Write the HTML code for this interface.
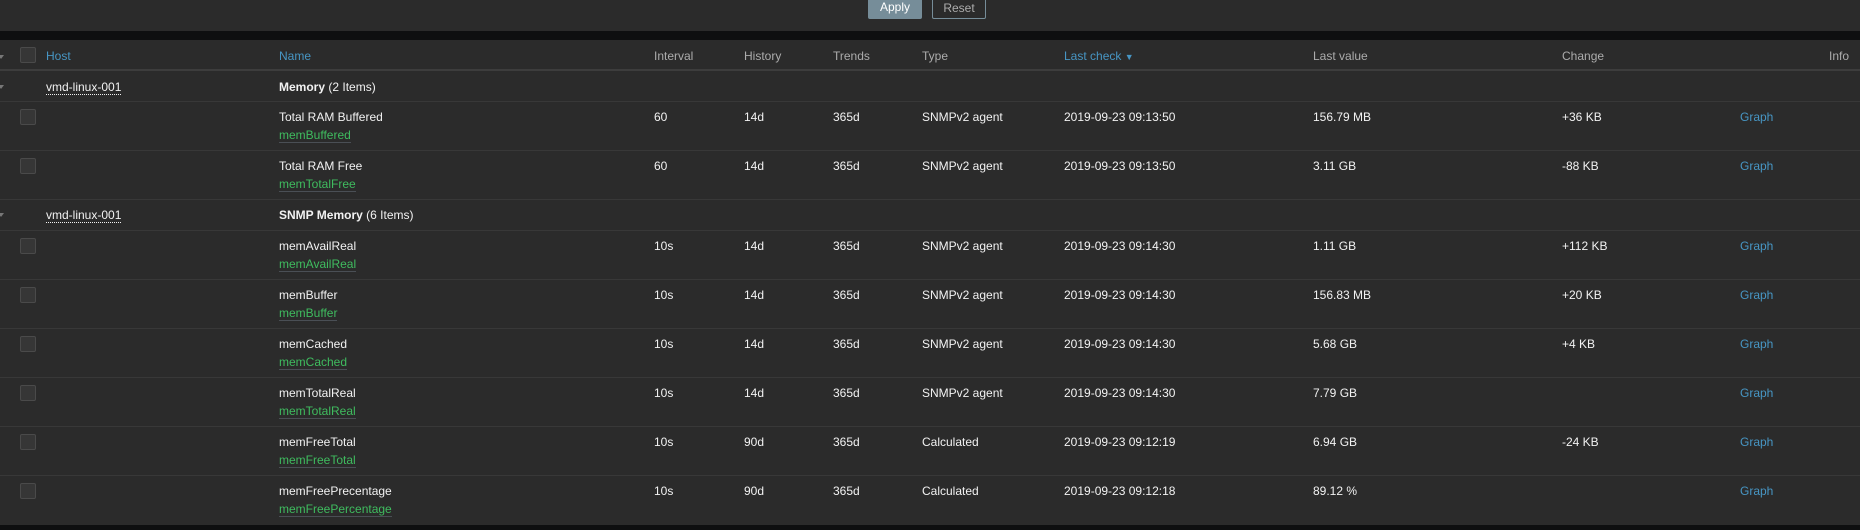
<!DOCTYPE html>
<html><head><meta charset="utf-8"><style>
*{margin:0;padding:0;box-sizing:border-box}
body{width:1860px;height:530px;background:#2b2b2b;font-family:"Liberation Sans",Arial,sans-serif;font-size:12px;color:#f2f2f2;position:relative;overflow:hidden}
.a{position:absolute;white-space:nowrap}
.btn{position:absolute;top:-2px;height:21px;width:54px;border-radius:2px;text-align:center;line-height:19px;font-size:12px}
.band{position:absolute;left:0;top:31px;width:1860px;height:9px;background:#0e0f10}
.hdr{position:absolute;left:0;top:40px;width:1860px;height:31px;border-bottom:2px solid #3d3d3d}
.row{position:absolute;left:0;width:1860px;border-bottom:1px solid #383838}
.cb{position:absolute;left:20px;width:16px;height:16px;background:#363636;border:1px solid #4a4a4a;border-radius:2px}
.h{color:#acacac}
.lk{color:#4796c4}
.key{color:#3fbc5f;border-bottom:1px solid #4a4f55}
.host{border-bottom:1px dotted #f2f2f2}
.tri{position:absolute;left:0;width:0;height:0;border-left:3px solid transparent;border-right:3px solid transparent;border-top:4px solid #777}
</style></head><body>
<div class="btn" style="left:868px;background:#768d99;color:#fff">Apply</div>
<div class="btn" style="left:932px;border:1px solid #768d99;color:#acacac">Reset</div>
<div class="band"></div>
<div class="hdr">
<div class="tri" style="top:15px;left:-2px"></div>
<div class="cb" style="top:7px"></div>
<div class="a lk" style="left:46px;top:9px">Host</div>
<div class="a lk" style="left:279px;top:9px">Name</div>
<div class="a h" style="left:654px;top:9px">Interval</div>
<div class="a h" style="left:744px;top:9px">History</div>
<div class="a h" style="left:833px;top:9px">Trends</div>
<div class="a h" style="left:922px;top:9px">Type</div>
<div class="a lk" style="left:1064px;top:9px">Last check <span style="font-size:9px">▼</span></div>
<div class="a h" style="left:1313px;top:9px">Last value</div>
<div class="a h" style="left:1562px;top:9px">Change</div>
<div class="a h" style="left:1829px;top:9px">Info</div>
</div>

<div class="row" style="top:73px;height:29px">
<div class="tri" style="top:12px;left:-2px"></div>
<div class="a host" style="left:46px;top:7px">vmd-linux-001</div>
<div class="a" style="left:279px;top:7px"><b>Memory</b> (2 Items)</div>
</div>
<div class="row" style="top:102px;height:49px">
<div class="cb" style="top:7px"></div>
<div class="a" style="left:279px;top:8px">Total RAM Buffered</div>
<div class="a key" style="left:279px;top:26px">memBuffered</div>
<div class="a" style="left:654px;top:8px">60</div><div class="a" style="left:744px;top:8px">14d</div><div class="a" style="left:833px;top:8px">365d</div><div class="a" style="left:922px;top:8px">SNMPv2 agent</div><div class="a" style="left:1064px;top:8px">2019-09-23 09:13:50</div><div class="a" style="left:1313px;top:8px">156.79 MB</div><div class="a" style="left:1562px;top:8px">+36 KB</div><div class="a lk" style="left:1740px;top:8px">Graph</div>
</div>
<div class="row" style="top:151px;height:49px">
<div class="cb" style="top:7px"></div>
<div class="a" style="left:279px;top:8px">Total RAM Free</div>
<div class="a key" style="left:279px;top:26px">memTotalFree</div>
<div class="a" style="left:654px;top:8px">60</div><div class="a" style="left:744px;top:8px">14d</div><div class="a" style="left:833px;top:8px">365d</div><div class="a" style="left:922px;top:8px">SNMPv2 agent</div><div class="a" style="left:1064px;top:8px">2019-09-23 09:13:50</div><div class="a" style="left:1313px;top:8px">3.11 GB</div><div class="a" style="left:1562px;top:8px">-88 KB</div><div class="a lk" style="left:1740px;top:8px">Graph</div>
</div>
<div class="row" style="top:200px;height:31px">
<div class="tri" style="top:13px;left:-2px"></div>
<div class="a host" style="left:46px;top:8px">vmd-linux-001</div>
<div class="a" style="left:279px;top:8px"><b>SNMP Memory</b> (6 Items)</div>
</div>
<div class="row" style="top:231px;height:49px">
<div class="cb" style="top:7px"></div>
<div class="a" style="left:279px;top:8px">memAvailReal</div>
<div class="a key" style="left:279px;top:26px">memAvailReal</div>
<div class="a" style="left:654px;top:8px">10s</div><div class="a" style="left:744px;top:8px">14d</div><div class="a" style="left:833px;top:8px">365d</div><div class="a" style="left:922px;top:8px">SNMPv2 agent</div><div class="a" style="left:1064px;top:8px">2019-09-23 09:14:30</div><div class="a" style="left:1313px;top:8px">1.11 GB</div><div class="a" style="left:1562px;top:8px">+112 KB</div><div class="a lk" style="left:1740px;top:8px">Graph</div>
</div>
<div class="row" style="top:280px;height:49px">
<div class="cb" style="top:7px"></div>
<div class="a" style="left:279px;top:8px">memBuffer</div>
<div class="a key" style="left:279px;top:26px">memBuffer</div>
<div class="a" style="left:654px;top:8px">10s</div><div class="a" style="left:744px;top:8px">14d</div><div class="a" style="left:833px;top:8px">365d</div><div class="a" style="left:922px;top:8px">SNMPv2 agent</div><div class="a" style="left:1064px;top:8px">2019-09-23 09:14:30</div><div class="a" style="left:1313px;top:8px">156.83 MB</div><div class="a" style="left:1562px;top:8px">+20 KB</div><div class="a lk" style="left:1740px;top:8px">Graph</div>
</div>
<div class="row" style="top:329px;height:49px">
<div class="cb" style="top:7px"></div>
<div class="a" style="left:279px;top:8px">memCached</div>
<div class="a key" style="left:279px;top:26px">memCached</div>
<div class="a" style="left:654px;top:8px">10s</div><div class="a" style="left:744px;top:8px">14d</div><div class="a" style="left:833px;top:8px">365d</div><div class="a" style="left:922px;top:8px">SNMPv2 agent</div><div class="a" style="left:1064px;top:8px">2019-09-23 09:14:30</div><div class="a" style="left:1313px;top:8px">5.68 GB</div><div class="a" style="left:1562px;top:8px">+4 KB</div><div class="a lk" style="left:1740px;top:8px">Graph</div>
</div>
<div class="row" style="top:378px;height:49px">
<div class="cb" style="top:7px"></div>
<div class="a" style="left:279px;top:8px">memTotalReal</div>
<div class="a key" style="left:279px;top:26px">memTotalReal</div>
<div class="a" style="left:654px;top:8px">10s</div><div class="a" style="left:744px;top:8px">14d</div><div class="a" style="left:833px;top:8px">365d</div><div class="a" style="left:922px;top:8px">SNMPv2 agent</div><div class="a" style="left:1064px;top:8px">2019-09-23 09:14:30</div><div class="a" style="left:1313px;top:8px">7.79 GB</div><div class="a lk" style="left:1740px;top:8px">Graph</div>
</div>
<div class="row" style="top:427px;height:49px">
<div class="cb" style="top:7px"></div>
<div class="a" style="left:279px;top:8px">memFreeTotal</div>
<div class="a key" style="left:279px;top:26px">memFreeTotal</div>
<div class="a" style="left:654px;top:8px">10s</div><div class="a" style="left:744px;top:8px">90d</div><div class="a" style="left:833px;top:8px">365d</div><div class="a" style="left:922px;top:8px">Calculated</div><div class="a" style="left:1064px;top:8px">2019-09-23 09:12:19</div><div class="a" style="left:1313px;top:8px">6.94 GB</div><div class="a" style="left:1562px;top:8px">-24 KB</div><div class="a lk" style="left:1740px;top:8px">Graph</div>
</div>
<div class="row" style="top:476px;height:49px;border-bottom:none">
<div class="cb" style="top:7px"></div>
<div class="a" style="left:279px;top:8px">memFreePrecentage</div>
<div class="a key" style="left:279px;top:26px">memFreePercentage</div>
<div class="a" style="left:654px;top:8px">10s</div><div class="a" style="left:744px;top:8px">90d</div><div class="a" style="left:833px;top:8px">365d</div><div class="a" style="left:922px;top:8px">Calculated</div><div class="a" style="left:1064px;top:8px">2019-09-23 09:12:18</div><div class="a" style="left:1313px;top:8px">89.12 %</div><div class="a lk" style="left:1740px;top:8px">Graph</div>
</div>
<div style="position:absolute;left:0;top:525px;width:1860px;height:5px;background:#0e0f10"></div>
</body></html>
